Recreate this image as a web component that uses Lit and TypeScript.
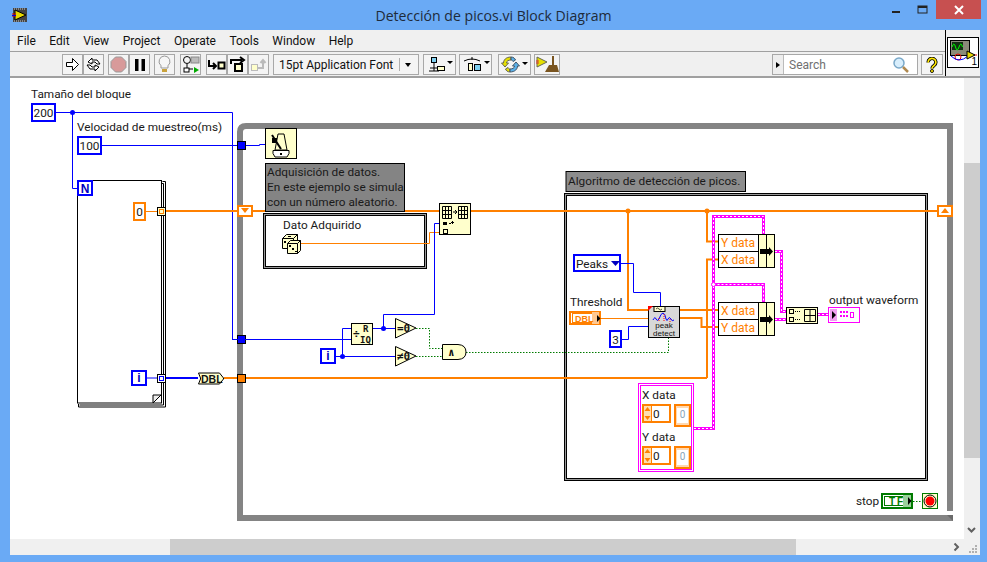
import { LitElement, html, svg, css } from "lit";
import { customElement } from "lit/decorators.js";

const BLUE = "#0000ff";
const ORANGE = "#ff8000";
const PINK = "#ff00ff";
const GREEN = "#007a00";
const BEIGE = "#ffffcc";

const wire = (d: string, color: string, w = 1) =>
  svg`<path d=${d} fill="none" stroke=${color} stroke-width=${w}/>`;
const boolWire = (d: string) =>
  svg`<path d=${d} fill="none" stroke=${GREEN} stroke-width="1" stroke-dasharray="1.5 1.5"/>`;
const clusterWire = (d: string) => svg`
  <path d=${d} fill="none" stroke=${PINK} stroke-width="3"/>
  <path d=${d} fill="none" stroke="#fff" stroke-width="1" stroke-dasharray="2 2"/>`;
const box = (x: number, y: number, w: number, h: number, stroke: string, fill = "#fff", sw = 1) =>
  svg`<rect x=${x + sw / 2} y=${y + sw / 2} width=${w - sw} height=${h - sw} fill=${fill} stroke=${stroke} stroke-width=${sw}/>`;
const label = (x: number, y: number, t: string, cls = "lbl") =>
  svg`<text x=${x} y=${y} class=${cls}>${t}</text>`;
const dot = (x: number, y: number, color: string, r = 2.5) =>
  svg`<circle cx=${x} cy=${y} r=${r} fill=${color}/>`;
const constant = (x: number, y: number, w: number, h: number, t: string, color = BLUE) => svg`
  ${box(x, y, w, h, color, "#fff", 2)}
  <text x=${x + w / 2} y=${y + h / 2 + 4.5} text-anchor="middle" class="lbl">${t}</text>`;
const tunnel = (x: number, y: number, color: string) => svg`
  <rect x=${x + 0.5} y=${y + 0.5} width="8" height="8" fill=${color} stroke="#000"/>`;

@customElement("block-diagram")
export class BlockDiagram extends LitElement {
  static styles = css`
    :host { display: block; width: 100%; height: 100%; background: #fff; }
    svg { display: block; width: 954px; height: 461px; }
    .lbl { font: 11.8px Roboto, sans-serif; fill: #1a1a1a; }
    .orange { font: 12px Roboto, sans-serif; fill: #ff8000; }
    .pale { font: 10px Roboto, sans-serif; fill: #8aa4b8; }
    .tiny { font: 8px "Liberation Sans", sans-serif; fill: #111; }
    .icon { font: bold 11px "DejaVu Sans Mono", monospace; fill: #111; }
    .term { font: bold 12px "Liberation Sans", sans-serif; }
  `;

  forLoop() {
    return svg`
      <path d="M162.5 181.5 h3 v225.5 h-87 v-3" fill="none" stroke="#000"/>
      <path d="M161 183.5 h2.5 v221.5 h-84" fill="none" stroke="#000"/>
      <rect x="77.5" y="180.5" width="84" height="222.5" fill="#fff" stroke="#000"/>
      <path d="M153 403 l8 -8 h-8 z" fill="#eee" stroke="#000"/>
      ${box(77, 180, 16, 16, BLUE, "#fff", 2)}
      <text x="85" y="192.5" text-anchor="middle" class="term" fill="#0000c0">N</text>
      ${constant(133, 202, 13, 19, "0", ORANGE)}
      ${wire("M146 211.5 H157", ORANGE)}
      <rect x="157.5" y="207.5" width="8" height="8" fill=${BEIGE} stroke="#000"/>
      <rect x="159.5" y="209.5" width="4" height="4" fill="none" stroke=${ORANGE}/>
      ${box(131, 370, 16, 16, BLUE, "#fff", 2)}
      <text x="139" y="382" text-anchor="middle" class="term" fill="#0000c0">i</text>
      ${wire("M147 378 H157", BLUE)}
      <rect x="157.5" y="374.5" width="8" height="8" fill="#fff" stroke="#000"/>
      <rect x="159.5" y="376.5" width="4" height="4" fill="none" stroke=${BLUE}/>
    `;
  }

  whileLoop() {
    return svg`
      <path d="M240 521 V132 q0 -6 6 -6 H950 V511" fill="none" stroke="#848484" stroke-width="6"/>
      <path d="M237 518 H953" fill="none" stroke="#848484" stroke-width="6"/>
      <path d="M947 515 h6 v6 l-3 -3 z" fill="#6a6a6a"/>
    `;
  }

  metronome() {
    return svg`
      ${box(265, 128, 32, 31, "#000", BEIGE)}
      <path d="M275 150 l3 -16 h6 l3 16 z" fill=${BEIGE} stroke="#000"/>
      <path d="M273 150.5 h16 v3 l-2 3.5 h-12 l-2 -3.5 z" fill="#fff" stroke="#000"/>
      <path d="M272 135 l9 14" stroke="#000" stroke-width="2"/>
      <rect x="272" y="138" width="5" height="5" fill="#000"/>
      <rect x="280" y="153" width="2" height="2" fill="#000"/>
    `;
  }

  dice() {
    return svg`
      <path d="M282.5 238.5 l4 -4 h11 l-4 4 z" fill=${BEIGE} stroke="#000"/>
      <path d="M282.5 238.5 h11 v10 h-11 z" fill=${BEIGE} stroke="#000"/>
      <path d="M293.5 238.5 l4 -4 v6 l-4 4 z" fill=${BEIGE} stroke="#000"/>
      <path d="M287.5 243.5 l3 -3 h10 l-3 3 z" fill=${BEIGE} stroke="#000"/>
      <path d="M287.5 243.5 h10 v10 h-10 z" fill=${BEIGE} stroke="#000"/>
      <path d="M297.5 243.5 l3 -3 v10 l-3 3 z" fill=${BEIGE} stroke="#000"/>
      <rect x="289" y="245" width="2" height="2" fill="#000"/>
      <rect x="292" y="248" width="2" height="2" fill="#000"/>
      <rect x="295" y="251" width="2" height="1" fill="#000"/>
      <rect x="288" y="236" width="3" height="1" fill="#000"/>
      <rect x="284" y="241" width="2" height="2" fill="#000"/>
    `;
  }

  acquisition() {
    return svg`
      <rect x="263.5" y="213.5" width="163" height="55" fill="none" stroke="#000"/>
      <rect x="264.5" y="214.5" width="161" height="53" fill="none" stroke="#999"/>
      <rect x="265.5" y="215.5" width="159" height="51" fill="#fff" stroke="#000"/>
      ${label(283, 229, "Dato Adquirido")}
      ${wire("M301 243.5 H427", ORANGE)}
      ${this.dice()}
      ${wire("M427 243.5 H429.5 V232.5 H439", ORANGE)}
      <rect x="265.5" y="163.5" width="139" height="48" fill="#848484" stroke="#000"/>
      ${label(267, 176, "Adquisición de datos.", "lbl note")}
      ${label(267, 191, "En este ejemplo se simula", "lbl note")}
      ${label(267, 206, "con un número aleatorio.", "lbl note")}
      ${box(439, 203, 32, 32, "#000", BEIGE)}
      <path d="M442.5 206.5 h9 v12 h-9 z M445.5 206.5 v12 M448.5 206.5 v12 M442.5 210.5 h9 M442.5 214.5 h9" fill="none" stroke="#000"/>
      <path d="M458.5 206.5 h9 v12 h-9 z M461.5 206.5 v12 M464.5 206.5 v12 M458.5 210.5 h9 M458.5 214.5 h9" fill="none" stroke="#000"/>
      <path d="M453 212 h4 m-2 -2 l2 2 -2 2" fill="none" stroke="#000"/>
      <rect x="443" y="222" width="4" height="3" fill="#000"/>
      <path d="M449 223.5 h2 M452.5 221 v3 M451 222.5 h3" stroke="#000"/>
      <rect x="443.5" y="229.5" width="4" height="4" fill="none" stroke="#000"/>
    `;
  }

  mathNodes() {
    const tri = (y: number, t: string) => svg`
      <path d="M395.5 ${y + 0.5} L416 ${y + 10} L395.5 ${y + 20} Z" fill=${BEIGE} stroke="#000"/>
      <text x="397" y=${y + 14} class="icon">${t}</text>`;
    return svg`
      ${wire("M232 339.5 H351", BLUE)}
      ${wire("M351 328.5 H342.5 V356.5", BLUE)}
      ${wire("M336 356.5 H395", BLUE)}
      ${wire("M373 328.5 H395", BLUE)}
      ${wire("M383.5 328.5 V314.5 H434.5 V223.5 H439", BLUE)}
      ${dot(383.5, 328.5, BLUE)}
      ${dot(342.5, 356.5, BLUE)}
      ${box(351, 323, 22, 22, "#000", BEIGE)}
      <text x="353" y="337" class="icon">÷</text>
      <text x="363" y="332" class="icon" style="font-size:9px">R</text>
      <text x="360" y="343" class="icon" style="font-size:9px">IQ</text>
      ${box(320, 348, 16, 16, BLUE, "#fff", 2)}
      <text x="328" y="360" text-anchor="middle" class="term" fill="#0000c0">i</text>
      ${tri(318, "=0")}
      ${tri(346, "≠0")}
      ${boolWire("M416 328.5 H429.5 V348.5 H442")}
      ${boolWire("M416 356.5 H442")}
      ${boolWire("M466 352.5 H668.5 V337")}
      <path d="M442.5 344.5 H458 Q466 345 466 352 Q466 359 458 359.5 H442.5 Z" fill=${BEIGE} stroke="#000"/>
      <text x="448" y="356" class="icon">∧</text>
    `;
  }

  peakDetect() {
    return svg`
      ${wire("M628 211 V310 H648", ORANGE, 2)}
      ${dot(628, 211, ORANGE)}
      ${wire("M601 318.5 H648", ORANGE)}
      ${wire("M621 263.5 H633.5 V292.5 H660.5 V306", BLUE)}
      ${wire("M622 339.5 H628.5 V326.5 H648", BLUE)}
      ${constant(573, 254, 48, 18, "", BLUE)}
      ${label(576, 268, "Peaks")}
      <path d="M611 261 h9 l-4.5 5 z" fill="#0000c0"/>
      ${label(570, 306, "Threshold")}
      ${box(569, 311, 32, 14, ORANGE, "#fff", 2)}
      <rect x="572.5" y="313.5" width="24" height="9" fill="none" stroke=${ORANGE}/>
      <rect x="592" y="312" width="7" height="12" fill="#ffc890"/>
      <text x="575" y="322" class="term" style="font-size:9px" fill=${ORANGE}>DBL</text>
      <path d="M597 315 l3.5 3.5 -3.5 3.5 z" fill="#000"/>
      ${constant(609, 330, 13, 18, "3")}
      ${box(648, 306, 32, 32, "#000", "#d8d8d8")}
      <rect x="654" y="306.5" width="11" height="5" fill=${BEIGE} stroke="#000"/>
      <path d="M656 309 q1.5 -2 3 0 t3 0" fill="none" stroke="#000" stroke-width=".7"/>
      <path d="M648 306 h5 l-5 5 z" fill="#ff0000"/>
      <path d="M653 320 q2 -4 3 -1 t3 0 q2 -6 4 -6 t3 6 q1 3 2 0 t3 0 q1 3 3 1" fill="none" stroke="#0000ff"/>
      <path d="M659 318 v4 M664 314 v8 M670 319 v3" stroke="#ff0000" stroke-dasharray="1 1"/>
      <text x="664" y="328" text-anchor="middle" class="tiny">peak</text>
      <text x="664" y="336" text-anchor="middle" class="tiny">detect</text>
    `;
  }

  bundle(y: number, a: string, b: string) {
    return svg`
      ${box(718, y, 57, 34, "#000", "#fff")}
      <rect x="758.5" y=${y + 0.5} width="16" height="33" fill=${BEIGE} stroke="#000"/>
      <path d="M718 ${y + 17.5} H758 M766.5 ${y} V${y + 34}" stroke="#000"/>
      <text x="721" y=${y + 13} class="orange">${a}</text>
      <text x="721" y=${y + 30} class="orange">${b}</text>
      <path d="M760 ${y + 15} h9 v-2 l4 4.5 -4 4.5 v-2 h-9 z" fill="#000"/>
    `;
  }

  waveform() {
    return svg`
      ${wire("M707 211 V241.5 H718", ORANGE, 2)}
      ${dot(707, 211, ORANGE)}
      ${wire("M707 378 V259.5 H718", ORANGE, 2)}
      ${wire("M680 310 H718", ORANGE, 2)}
      ${wire("M680 318 H701.5 V327 H718", ORANGE, 2)}
      ${clusterWire("M694 428.5 H713.5 V216.5 H763.5 V234")}
      ${clusterWire("M713.5 284.5 H763.5 V302")}
      <circle cx="713.5" cy="284.5" r="2" fill="#fff" stroke=${PINK}/>
      ${this.bundle(234, "Y data", "X data")}
      ${this.bundle(302, "X data", "Y data")}
      ${clusterWire("M775 251.5 H781.5 V311.5 H786")}
      ${clusterWire("M775 319.5 H786")}
      ${clusterWire("M818 314.5 H828")}
      ${box(786, 307, 32, 17, "#000", BEIGE)}
      <rect x="789.5" y="309.5" width="4" height="4" fill="none" stroke="#000"/>
      <rect x="789.5" y="317.5" width="4" height="4" fill="none" stroke="#000"/>
      <path d="M795 311.5 h6 M795 319.5 h6" stroke="#000" stroke-dasharray="1 1"/>
      <path d="M804.5 309.5 h11 v12 h-11 z M810 309.5 v12 M804.5 315.5 h11" fill="none" stroke="#000"/>
      ${box(828, 307, 32, 16, PINK, "#fff")}
      <rect x="830" y="309" width="7" height="12" fill="#f0a0f0"/>
      <path d="M832 311 l4 4 -4 4 z" fill="#000"/>
      <path d="M840 312 h8 M840 316 h8" stroke=${PINK} stroke-dasharray="2 1" stroke-width="2"/>
      <rect x="850.5" y="312.5" width="3" height="5" fill="none" stroke=${PINK}/>
      ${label(829, 304, "output waveform")}
    `;
  }

  numeric(y: number, name: string, tall: number) {
    return svg`
      ${label(642, y, name)}
      ${box(642, y + 5, 29, 19, ORANGE, "#fff", 2)}
      <rect x="644" y=${y + 7} width="7" height="15" fill="#ffe0b0"/>
      <path d="M647.5 ${y + 8} l3 4 h-6 z M647.5 ${y + 21} l3 -4 h-6 z" fill=${ORANGE}/>
      <path d="M651.5 ${y + 7} V${y + 22}" stroke=${ORANGE}/>
      <text x="653" y=${y + 19} class="lbl">0</text>
      ${box(674, y + 5, 17, tall, ORANGE, "#ffd8b0", 2)}
      <rect x="677" y=${y + 9} width="11" height=${tall - 8} fill="#fff"/>
      <text x="682.5" y=${y + 19} text-anchor="middle" class="pale">0</text>
    `;
  }

  cluster() {
    return svg`
      <rect x="638.5" y="383.5" width="55" height="88" fill="none" stroke=${PINK}/>
      <rect x="640.5" y="385.5" width="51" height="84" fill="#fff" stroke=${PINK}/>
      ${this.numeric(399, "X data", 23)}
      ${this.numeric(441, "Y data", 23)}
    `;
  }

  stop() {
    return svg`
      ${label(856, 505, "stop")}
      ${box(881, 493, 32, 16, GREEN, "#fff", 2)}
      <rect x="884.5" y="496.5" width="24" height="9" fill="none" stroke=${GREEN}/>
      <rect x="903" y="495" width="8" height="12" fill="#9ad09a"/>
      <text x="889" y="505" class="term" style="font-size:10px;letter-spacing:2px" fill=${GREEN}>TF</text>
      <path d="M908 497 l3.5 4 -3.5 4 z" fill="#000"/>
      ${boolWire("M913 501.5 H922")}
      ${box(922, 493, 16, 16, GREEN, BEIGE)}
      <circle cx="930" cy="501" r="6" fill="none" stroke="#000"/>
      <circle cx="930" cy="501" r="4.5" fill="#ff0000"/>
    `;
  }

  render() {
    return html`<svg viewBox="10 78 954 461">
      ${label(31, 98, "Tamaño del bloque")}
      ${wire("M55 112.5 H232.5 V339", BLUE)}
      ${wire("M72.5 112.5 V188.5 H77", BLUE)}
      ${dot(72.5, 112.5, BLUE)}
      ${label(77, 131, "Velocidad de muestreo(ms)")}
      ${constant(31, 103, 25, 19, "200")}
      ${constant(77, 136, 25, 19, "100")}
      ${wire("M102 145.5 H259.5 V144.5 H265", BLUE)}
      ${this.whileLoop()}
      ${wire("M165 211 H237", ORANGE, 2)}
      ${wire("M165 378 H198", BLUE, 2)}
      ${wire("M224 378 H237", ORANGE, 2)}
      ${this.forLoop()}
      ${tunnel(237, 141, BLUE)}
      ${tunnel(237, 335, BLUE)}
      ${tunnel(237, 374, ORANGE)}
      <rect x="238" y="206" width="14" height="10" fill="#fff" stroke=${ORANGE} stroke-width="2"/>
      <path d="M241 208 h8 l-4 5 z" fill=${ORANGE}/>
      <path d="M198.5 373 h21 l4 5 v1 l-4 5 h-21 l2 -5 v-1 z" fill=${BEIGE} stroke="#000"/>
      <text x="201" y="382.5" class="term" style="font-size:10.5px" fill="#111">DBL</text>
      ${this.metronome()}
      <rect x="566" y="171.5" width="179.5" height="20" fill="#8c8c8c" stroke="#000"/>
      ${label(568, 185, "Algoritmo de detección de picos.")}
      <rect x="564.5" y="193.5" width="363" height="287" fill="none" stroke="#000"/>
      <rect x="565.5" y="194.5" width="361" height="285" fill="none" stroke="#999"/>
      <rect x="566.5" y="195.5" width="359" height="283" fill="none" stroke="#000"/>
      ${wire("M252 211 H937", ORANGE, 2)}
      ${wire("M246 378 H707", ORANGE, 2)}
      ${this.acquisition()}
      ${this.mathNodes()}
      ${this.peakDetect()}
      ${this.waveform()}
      ${this.cluster()}
      ${this.stop()}
      <rect x="938" y="206" width="14" height="10" fill="#fff" stroke=${ORANGE} stroke-width="2"/>
      <path d="M941 213 h8 l-4 -5 z" fill=${ORANGE}/>
    </svg>`;
  }
}

@customElement("app-root")
export class AppRoot extends LitElement {
  static styles = css`
    :host {
      display: flex; flex-direction: column; width: 987px; height: 562px;
      background: #6aaaf5; overflow: hidden; font-family: Roboto, sans-serif; color: #111;
    }
    .title { height: 30px; display: flex; align-items: center; position: relative; flex: none; }
    .title .app { margin-left: 12px; width: 16px; height: 16px; }
    .title .name { position: absolute; left: 0; right: 0; text-align: center; font: 14.1px "Open Sans", sans-serif; color: #1e2b3a; }
    .controls { margin-left: auto; display: flex; align-items: flex-start; height: 30px; position: relative; }
    .controls svg { display: block; }
    .ctl { height: 19px; display: flex; align-items: center; justify-content: center; }
    .ctl.minimize { width: 32px; }
    .ctl.minimize svg { margin-top: 5px; }
    .ctl.maximize { width: 20px; }
    .close { width: 45px; height: 19px; background: #c75050; margin-left: 3px; margin-right: 6px; display: flex; align-items: center; justify-content: center; }
    .window { flex: none; width: 970px; height: 525px; margin-left: 10px; display: flex; flex-direction: column; background: #f0f0f0; position: relative; }
    .menu { height: 21px; display: flex; gap: 13.5px; align-items: center; padding-left: 7px; font-size: 12px; background: #f0f0f0; flex: none; border-bottom: 1px solid #a0a0a0; }
    .tools { height: 23px; padding-top: 1px; display: flex; align-items: center; padding-left: 52px; background: #f0f0f0; flex: none; border-bottom: 2px solid #a0a0a0; }
    .group { display: flex; }
    .btn { height: 21px; width: 21px; border: 1px solid #a8a8a8; background: #f4f4f4; display: flex; align-items: center; justify-content: center; box-sizing: border-box; }
    .g4 { margin-left: 4px; }
    .g5 { margin-left: 5px; }
    .g3 { margin-left: 3px; }
    .g6 { margin-left: 6px; }
    .w33 { width: 33px; }
    .w26 { width: 26px; }
    .w22 { width: 22px; }
    .font { width: 146px; justify-content: flex-start; font-size: 12px; padding: 0 0 0 5px; }
    .font .sep { margin-left: auto; width: 1px; height: 13px; background: #b0b0b0; }
    .font .arrow { margin: 0 7px 0 5px; }
    .arrow { display: inline-block; width: 0; height: 0; border: 3px solid transparent; border-top: 4px solid #000; border-bottom: 0; }
    .search { width: 146px; height: 21px; margin-left: auto; border: 1px solid #a8a8a8; background: #fff; display: flex; align-items: center; box-sizing: border-box; font-size: 12px; color: #707070; }
    .search .drop { width: 10px; height: 100%; background: #eee; border-right: 1px solid #bbb; display: flex; align-items: center; justify-content: center; margin-right: 5px; flex: none; }
    .search .tip { border: 3px solid transparent; border-left: 4px solid #000; border-right: 0; }
    .search .glass { margin-left: auto; margin-right: 7px; }
    .help { margin-left: 3px; margin-right: 37px; }
    .vi { position: absolute; right: 0; top: 0; width: 35px; height: 46px; box-sizing: border-box; padding: 7px 1px 0 1px; border-left: 1px solid #000; background: #f0f0f0; }
    .vi .frame { width: 32px; height: 31px; border: 1px solid #000; background: #fff; box-sizing: border-box; position: relative; font: 10px "Liberation Sans", sans-serif; }
    .vi .frame svg { display: block; }
    .vi .frame span { position: absolute; right: 1px; bottom: 0; color: #000; }
    .middle { height: 461px; display: flex; flex: none; }
    .canvas { width: 954px; flex: none; }
    .vbar { width: 16px; background: #f0f0f0; position: relative; flex: none; }
    .vthumb { position: absolute; top: 85px; left: 0; width: 16px; height: 295px; background: #cdcdcd; }
    .vchev { position: absolute; bottom: 6px; left: 3px; }
    .hbar { height: 16px; background: #f0f0f0; position: relative; flex: none; }
    .hthumb { position: absolute; left: 160px; width: 626px; height: 16px; background: #cdcdcd; top: 0; }
    .hchev { position: absolute; right: 19px; top: 5px; }
    .grip { position: absolute; right: 2px; bottom: 1px; display: block; }
    .chev { display: block; }
    .chev.right { transform: rotate(-90deg); }
  `;

  chevron(cls = "") {
    return html`<svg class="chev ${cls}" width="9" height="6" viewBox="0 0 9 6">
      <path d="M1 1 L4.5 4.5 L8 1" fill="none" stroke="#606060" stroke-width="2"/></svg>`;
  }

  toolbar() {
    return html`<div class="tools">
      <div class="group">
        <div class="btn"><svg width="15" height="15"><path d="M1.5 5.5 h6 v-4 l6 6 -6 6 v-4 h-6 z" fill="#fff" stroke="#000"/></svg></div>
        <div class="btn"><svg width="17" height="17"><path d="M3 6 l4 -4 v2 h5 l3 4 -3 0 -2 -2 h-3 v2 z M14 11 l-4 4 v-2 h-5 l-3 -4 3 0 2 2 h3 v-2 z" fill="#fff" stroke="#000"/></svg></div>
      </div>
      <div class="group g4">
        <div class="btn"><svg width="17" height="17"><path d="M5.5 1 h6 l4.5 4.5 v6 l-4.5 4.5 h-6 l-4.5 -4.5 v-6 z" fill="#d89a9a" stroke="#999"/></svg></div>
        <div class="btn"><svg width="12" height="12"><rect x="1" y="0" width="3.5" height="12"/><rect x="7.5" y="0" width="3.5" height="12"/></svg></div>
      </div>
      <div class="btn g4"><svg width="15" height="19"><path d="M7.5 1 a5.5 5.5 0 0 1 3.5 9.7 v2.3 h-7 v-2.3 a5.5 5.5 0 0 1 3.5 -9.7 z" fill="#f6f6f6" stroke="#999"/><rect x="5" y="14" width="5" height="3" fill="#c9a23c"/></svg></div>
      <div class="btn g5"><svg width="19" height="19"><circle cx="6" cy="5" r="3.5" fill="none" stroke="#000"/><rect x="10" y="2" width="8" height="6" fill="#bbb" stroke="#888"/><path d="M6 9 v5 M3 14 h9" stroke="#000"/><rect x="3" y="13" width="5" height="4" fill="#fff" stroke="#000"/><path d="M13 12 l5 3 -5 3 z" fill="#0a0"/></svg></div>
      <div class="group g5">
        <div class="btn"><svg width="18" height="14"><path d="M1 2 v6 h6 M5 5 l3 3 -3 3" fill="none" stroke="#000" stroke-width="2"/><rect x="10.5" y="4.5" width="6" height="6" fill="#ffc" stroke="#000" stroke-width="2"/></svg></div>
        <div class="btn"><svg width="18" height="17"><path d="M2 8 v-4 h11 M11 1 l4 3 -4 3" fill="none" stroke="#000" stroke-width="2"/><rect x="6" y="8" width="7" height="7" fill="#ffc" stroke="#000" stroke-width="2"/></svg></div>
        <div class="btn"><svg width="18" height="15"><rect x="1.5" y="7.5" width="6" height="6" fill="#ffc" stroke="#bbb"/><path d="M8 11 h5 v-7 M10.5 6 l2.5 -3 2.5 3" fill="none" stroke="#bbb" stroke-width="2"/></svg></div>
      </div>
      <div class="btn font g4"><span>15pt Application Font</span><span class="sep"></span><span class="arrow"></span></div>
      <div class="btn w33 g4"><svg width="26" height="17"><rect x="4.5" y="1.5" width="5" height="5" fill="#7fd0f0" stroke="#000"/><path d="M7 7 v8 M3 12 h8 M2 15 h10" stroke="#000"/><rect x="10.5" y="10.5" width="7" height="4" fill="#ffc" stroke="#000"/><path d="M20 5 h6 l-3 3 z"/></svg></div>
      <div class="btn w33 g3"><svg width="28" height="17"><path d="M2 5 q8 -4 16 0 M10 1 v3" fill="none" stroke="#000"/><rect x="6.5" y="7.5" width="4" height="7" fill="#ffc" stroke="#000"/><rect x="12.5" y="8.5" width="6" height="6" fill="#7fd0f0" stroke="#000"/><path d="M22 5 h6 l-3 3 z"/></svg></div>
      <div class="btn w33 g6"><svg width="27" height="19">
        <path d="M10 2 C5 2 2.5 5 2.5 8 H0.5 L4 12 L7.5 8 H5.5 C5.5 6 7.5 5 10 5 Z" fill="#e6e000" stroke="#665"/>
        <path d="M9 17 C6.5 17 5 15.5 4.5 14 L7 12.5 C7.5 13.5 8 14 9 14 Z" fill="#e6e000" stroke="#665"/>
        <path d="M9 17 C14 17 16.5 14 16.5 11 H18.5 L15 7 L11.5 11 H13.5 C13.5 13 11.5 14 9 14 Z" fill="#5ab0e8" stroke="#456"/>
        <path d="M10 2 C12.5 2 14 3.5 14.5 5 L12 6.5 C11.5 5.5 11 5 10 5 Z" fill="#5ab0e8" stroke="#456"/>
        <path d="M21 7 h6 l-3 3 z"/></svg></div>
      <div class="btn w26 g3"><svg width="23" height="17"><path d="M1 1 l10 5 -10 5 z" fill="#e6e000" stroke="#665"/><path d="M0 5 h3 M0 7 h3" stroke="#d33"/><path d="M17 0 v9" stroke="#7a5520" stroke-width="2"/><path d="M9 16 l4 -7 h8 l2 7 z" fill="#7a5520"/></svg></div>
      <div class="search">
        <span class="drop"><span class="tip"></span></span>
        Search
        <svg class="glass" width="18" height="18"><circle cx="7" cy="7" r="5" fill="#d8eefc" stroke="#7aa8c8" stroke-width="1.5"/><path d="M11 11 l5 5" stroke="#b08a50" stroke-width="2.5"/></svg>
      </div>
      <div class="btn w22 help"><svg width="12" height="16" viewBox="0 0 14 18"><path d="M2.5 6 a4.5 4.5 0 1 1 7 3.5 q-2.5 1.5 -2.5 3.5" fill="none" stroke="#000" stroke-width="4"/><path d="M2.5 6 a4.5 4.5 0 1 1 7 3.5 q-2.5 1.5 -2.5 3.5" fill="none" stroke="#ffe600" stroke-width="2"/><circle cx="7" cy="16" r="1.8" fill="#ffe600" stroke="#000"/></svg></div>
    </div>`;
  }

  render() {
    return html`
      <div class="title">
        <svg class="app" viewBox="0 0 16 16">
          <rect width="14" height="14" x="1" y="1" fill="#444"/>
          <path d="M2 2 h12 M2 14 h12" stroke="#ccc" stroke-dasharray="1 1"/>
          <path d="M3 3 L14 8 L3 13 Z" fill="#e6d800" stroke="#000"/>
          <path d="M0 7 h4 M0 9 h4" stroke="#d00"/>
          <path d="M0 8.5 h4" stroke="#00d"/>
        </svg>
        <div class="name">Detección de picos.vi Block Diagram</div>
        <div class="controls">
          <div class="ctl minimize"><svg width="10" height="4"><rect y="1" width="8" height="2" fill="#222"/></svg></div>
          <div class="ctl maximize"><svg width="12" height="10"><rect x="1" y="1" width="9" height="7" fill="none" stroke="#222"/><rect x="1" y="1" width="9" height="2" fill="#222"/></svg></div>
          <div class="close"><svg width="10" height="10"><path d="M1 1 L9 9 M9 1 L1 9" stroke="#fff" stroke-width="2"/></svg></div>
        </div>
      </div>
      <div class="window">
        <div class="menu">
          ${["File", "Edit", "View", "Project", "Operate", "Tools", "Window", "Help"].map((m) => html`<span>${m}</span>`)}
        </div>
        ${this.toolbar()}
        <div class="vi">
          <div class="frame">
            <svg width="30" height="29" viewBox="0 0 30 29">
              <rect x="2.5" y="2.5" width="19" height="15" fill="#8a8a78" stroke="#000"/>
              <rect x="4" y="4" width="11" height="8" fill="#123012"/>
              <path d="M4 9 q2 -6 3.5 0 t3.5 0 t3.5 0" fill="none" stroke="#0f0"/>
              <circle cx="10" cy="19" r="3" fill="none" stroke="#d00"/>
              <path d="M3 18 q8 8 17 0" fill="none" stroke="#00f"/>
              <path d="M19 9 h10" stroke="#d00" transform="translate(0 8)"/>
              <path d="M19 13 l8 4 -8 4 z" fill="#e6d800" stroke="#000"/>
            </svg>
            <span>1</span>
          </div>
        </div>
        <div class="middle">
          <div class="canvas"><block-diagram></block-diagram></div>
          <div class="vbar"><div class="vthumb"></div><div class="vchev">${this.chevron()}</div></div>
        </div>
        <div class="hbar">
          <div class="hthumb"></div>
          <div class="hchev">${this.chevron("right")}</div>
          <svg class="grip" width="9" height="9">
            <path d="M6 0 h2 v2 h-2 z M3 3 h2 v2 h-2 z M6 3 h2 v2 h-2 z M0 6 h2 v2 h-2 z M3 6 h2 v2 h-2 z M6 6 h2 v2 h-2 z" fill="#b0b0b0"/>
          </svg>
        </div>
      </div>
    `;
  }
}
